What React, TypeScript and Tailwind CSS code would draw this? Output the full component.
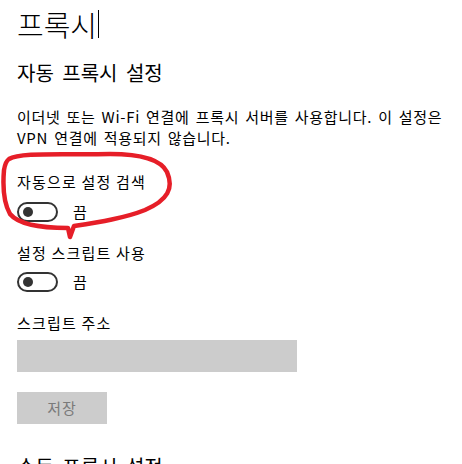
import React from "react";

const font = { fontFamily: '"Noto Sans CJK KR", "Noto Sans", sans-serif' };

const Toggle = () => (
  <div className="flex items-center gap-[15px] h-[20px]">
    <div className="w-[41px] h-[20px] rounded-full border-2 border-[#333] flex items-center pl-[4px]">
      <div className="w-[10px] h-[10px] rounded-full bg-[#333]" />
    </div>
    <span className="text-[15px] leading-[20px] text-black">끔</span>
  </div>
);

const App = () => {
  return (
    <div className="relative w-[462px] h-[464px] overflow-hidden bg-white text-black" style={font}>
      <div className="pl-[17px] pt-[5px] flex flex-col">
        <div className="flex items-center h-[38px]">
          <h1 className="text-[29px] leading-[38px] font-light">프록시</h1>
          <span className="ml-[1px] w-[1px] h-[28px] bg-black" />
        </div>
        <h2 className="mt-[16px] text-[20px] leading-[28px] font-normal [word-spacing:4px]">자동 프록시 설정</h2>
        <p className="mt-[19px] text-[15px] leading-[21px] tracking-[0.7px] [word-spacing:2px] whitespace-nowrap">
          이더넷 또는 Wi-Fi 연결에 프록시 서버를 사용합니다. 이 설정은
          <br />
          VPN 연결에 적용되지 않습니다.
        </p>
        <div className="mt-[24px] text-[15px] leading-[20px] tracking-[1.2px]">자동으로 설정 검색</div>
        <div className="mt-[10px]">
          <Toggle />
        </div>
        <div className="mt-[21px] text-[15px] leading-[20px] tracking-[1.2px]">설정 스크립트 사용</div>
        <div className="mt-[9px]">
          <Toggle />
        </div>
        <div className="mt-[21px] text-[15px] leading-[20px] tracking-[1.2px]">스크립트 주소</div>
        <div className="mt-[7px] w-[280px] h-[32px] bg-[#cccccc]" />
        <div className="mt-[20px] w-[90px] h-[32px] bg-[#cccccc] flex items-center justify-center text-[15px] tracking-[1px] text-[#7a7a7a]">
          저장
        </div>
        <h2 className="mt-[29px] text-[20px] leading-[28px] font-normal [word-spacing:4px]">수동 프록시 설정</h2>
      </div>
      <svg
        className="absolute left-0 top-0 pointer-events-none"
        width="462"
        height="464"
        viewBox="0 0 462 464"
      >
        <path
          d="M 9 159 C 20 152, 60 155, 110 154 C 138 154, 160 158, 167 172 C 174 188, 168 200, 145 210 C 125 218, 100 222, 74 226 L 70 237 L 68 228 C 45 228, 20 226, 10 214 C 2 200, 3 182, 4 170 C 5 164, 6 161, 9 159 Z"
          fill="none"
          stroke="#e61e28"
          strokeWidth="4.5"
          strokeLinecap="round"
          strokeLinejoin="round"
        />
      </svg>
    </div>
  );
};

export default App;
